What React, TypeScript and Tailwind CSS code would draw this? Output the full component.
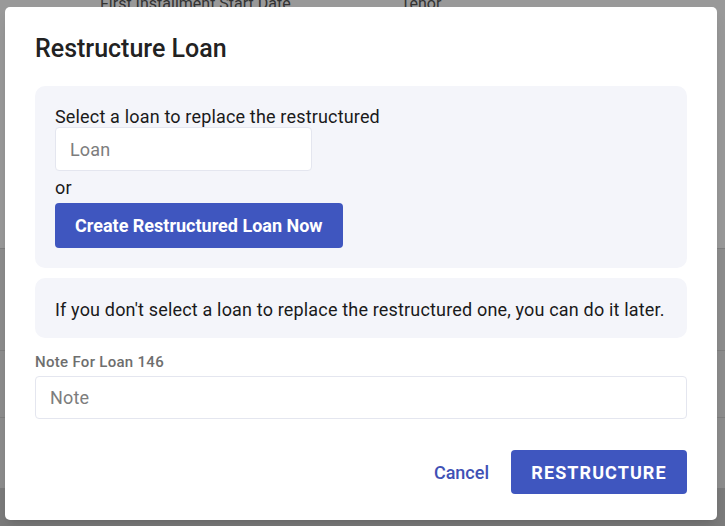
import React from "react";

const font = { fontFamily: "Roboto, 'Liberation Sans', sans-serif" };

const BackgroundPage: React.FC = () => (
  <div className="flex h-[526px] flex-col overflow-hidden bg-[#ececec]">
    <div className="flex h-[265px] flex-col border-b border-[#d4d4d4] bg-white pl-[5px]">
      <div className="-mt-[6px] flex h-[20px] items-center text-[16px] text-[#555]">
        <span className="ml-[95px]">First Installment Start Date</span>
        <span className="ml-[110px]">Tenor</span>
      </div>
    </div>
    <div className="h-[108px] border-b border-[#d4d4d4]" />
    <div className="h-[71px] border-b border-[#d4d4d4]" />
    <div className="h-[75px]" />
    <div className="flex h-[40px] items-start bg-[#cdcdcd] text-[18px] leading-[14px] text-[#222]">
      <span className="ml-[136px]">0.00</span>
      <span className="ml-[127px]">0.00 476 247 860 000 00</span>
      <span className="ml-[6px] flex h-[30px] w-[132px] justify-center bg-[#f3d6d2] pl-[8px] text-[#c0392b]">
        Default
      </span>
    </div>
  </div>
);

type FieldProps = {
  placeholder: string;
  className?: string;
};

const Field: React.FC<FieldProps> = ({ placeholder, className = "" }) => (
  <input
    placeholder={placeholder}
    className={`rounded-[4px] border border-[#e4e6ef] bg-white px-[14px] text-[18px] tracking-[0.00938em] text-[#222] outline-none placeholder:text-[#7d7d7d] ${className}`}
    style={font}
  />
);

export default function App() {
  return (
    <div className="relative h-[526px] w-[725px] overflow-hidden" style={font}>
      <BackgroundPage />
      <div className="absolute inset-0 bg-black/40" />

      <div className="absolute left-[5px] top-[7px] flex w-[712px] flex-col rounded-[5px] bg-white px-[30px] pb-[26px] pt-[26px] shadow-lg">
        <h2 className="text-[25px] font-medium leading-[32px] text-[#222]">Restructure Loan</h2>

        <div className="mt-[21px] flex flex-col items-start rounded-[10px] bg-[#f4f5fa] px-[20px] pb-[20px] pt-[21px]">
          <p className="text-[18px] leading-[20px] tracking-[0.00938em] text-[#1a1a1a]">
            Select a loan to replace the restructured
          </p>
          <Field placeholder="Loan" className="h-[44px] w-[257px]" />
          <p className="mt-[7px] text-[18px] leading-[20px] tracking-[0.00938em] text-[#1a1a1a]">or</p>
          <button className="mt-[5px] h-[45px] rounded-[4px] bg-[#3f56bf] px-[20px] text-[18px] font-bold text-white">
            Create Restructured Loan Now
          </button>
        </div>

        <div className="mt-[10px] rounded-[10px] bg-[#f4f5fa] px-[20px] pb-[18px] pt-[22px]">
          <p className="text-[18px] leading-[20px] tracking-[0.00938em] text-[#1a1a1a]">
            If you don't select a loan to replace the restructured one, you can do it later.
          </p>
        </div>

        <label className="mt-[16px] text-[15px] font-medium leading-[16px] tracking-[0.02em] text-[#6e6e6e]">
          Note For Loan 146
        </label>
        <Field placeholder="Note" className="mt-[6px] h-[43px] w-full" />

        <div className="mt-[31px] flex items-center justify-end gap-[22px]">
          <button className="text-[18px] font-medium text-[#3f51b5]">Cancel</button>
          <button className="h-[44px] w-[176px] rounded-[4px] bg-[#3f56bf] text-[18px] font-bold tracking-[0.06em] text-white">
            RESTRUCTURE
          </button>
        </div>
      </div>
    </div>
  );
}
